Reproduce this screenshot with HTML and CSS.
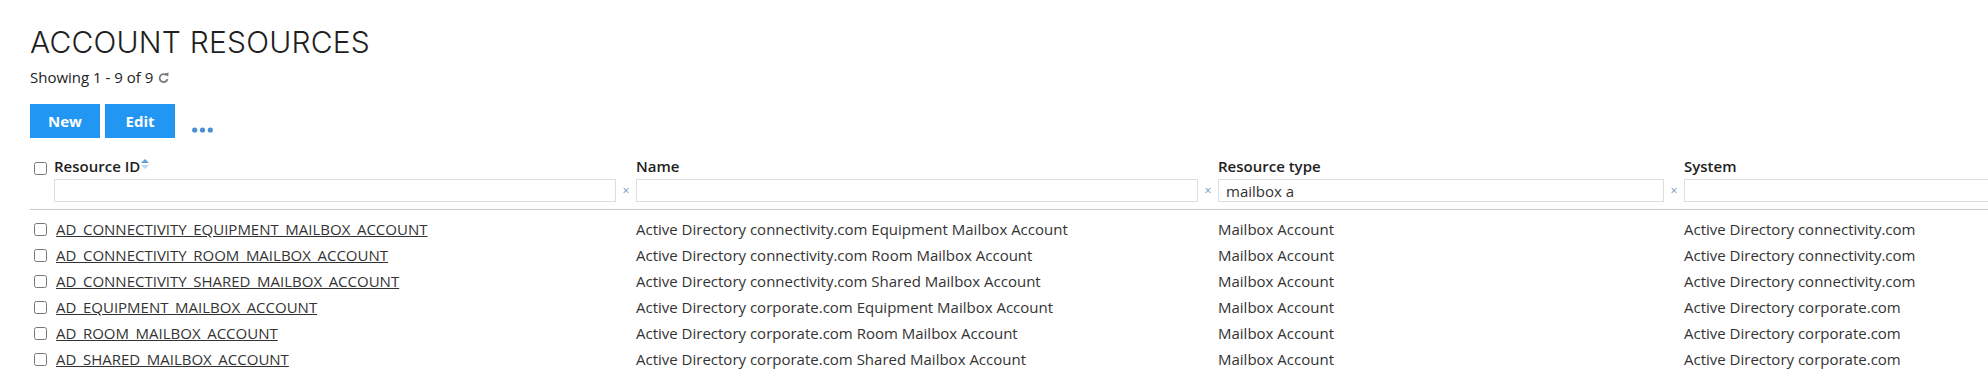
FILE: index.html
```html
<!DOCTYPE html>
<html lang="en">
<head>
<meta charset="utf-8">
<title>Account Resources</title>
<link rel="stylesheet" href="styles.css">
</head>
<body>
<div class="page">
  <h1 class="title">ACCOUNT RESOURCES</h1>
  <div class="count">Showing 1 - 9 of 9
    <svg class="refresh" width="11" height="12" viewBox="0 0 11 12"><path d="M8.6 3.4 A4 4 0 1 0 9.5 7" fill="none" stroke="#7b7b7b" stroke-width="1.8"/><polygon points="6.6,1.6 10.6,0.6 10.2,4.8" fill="#7b7b7b"/></svg>
  </div>
  <div class="toolbar">
    <button class="btn">New</button>
    <button class="btn">Edit</button>
    <svg class="more" width="21" height="6" viewBox="0 0 21 6"><circle cx="2.7" cy="3" r="2.6" fill="#4a8fd2"/><circle cx="10.5" cy="3" r="2.6" fill="#4a8fd2"/><circle cx="18.3" cy="3" r="2.6" fill="#4a8fd2"/></svg>
  </div>

  <div class="cols head">
    <div class="hcell chkcell"><input type="checkbox" class="hchk"></div>
    <div class="hcell">
      <div class="hlabel">Resource ID<svg class="sort" width="8" height="10" viewBox="0 0 8 10"><polygon points="0,4 4,0 8,4" fill="#5b9fd8"/><polygon points="0,6 4,10 8,6" fill="#bcd5ee"/></svg></div>
      <div class="filter"><input class="finput" type="text"><span class="clear">×</span></div>
    </div>
    <div class="hcell">
      <div class="hlabel">Name</div>
      <div class="filter"><input class="finput" type="text"><span class="clear">×</span></div>
    </div>
    <div class="hcell">
      <div class="hlabel">Resource type</div>
      <div class="filter"><input class="finput" type="text" value="mailbox a"><span class="clear">×</span></div>
    </div>
    <div class="hcell">
      <div class="hlabel">System</div>
      <div class="filter"><input class="finput" type="text"></div>
    </div>
  </div>

  <div class="cols body">
    <div class="cell chkcell"><input type="checkbox" class="rchk"></div>
    <div class="cell"><a class="link" href="#">AD_CONNECTIVITY_EQUIPMENT_MAILBOX_ACCOUNT</a></div>
    <div class="cell">Active Directory connectivity.com Equipment Mailbox Account</div>
    <div class="cell">Mailbox Account</div>
    <div class="cell">Active Directory connectivity.com</div>

    <div class="cell chkcell"><input type="checkbox" class="rchk"></div>
    <div class="cell"><a class="link" href="#">AD_CONNECTIVITY_ROOM_MAILBOX_ACCOUNT</a></div>
    <div class="cell">Active Directory connectivity.com Room Mailbox Account</div>
    <div class="cell">Mailbox Account</div>
    <div class="cell">Active Directory connectivity.com</div>

    <div class="cell chkcell"><input type="checkbox" class="rchk"></div>
    <div class="cell"><a class="link" href="#">AD_CONNECTIVITY_SHARED_MAILBOX_ACCOUNT</a></div>
    <div class="cell">Active Directory connectivity.com Shared Mailbox Account</div>
    <div class="cell">Mailbox Account</div>
    <div class="cell">Active Directory connectivity.com</div>

    <div class="cell chkcell"><input type="checkbox" class="rchk"></div>
    <div class="cell"><a class="link" href="#">AD_EQUIPMENT_MAILBOX_ACCOUNT</a></div>
    <div class="cell">Active Directory corporate.com Equipment Mailbox Account</div>
    <div class="cell">Mailbox Account</div>
    <div class="cell">Active Directory corporate.com</div>

    <div class="cell chkcell"><input type="checkbox" class="rchk"></div>
    <div class="cell"><a class="link" href="#">AD_ROOM_MAILBOX_ACCOUNT</a></div>
    <div class="cell">Active Directory corporate.com Room Mailbox Account</div>
    <div class="cell">Mailbox Account</div>
    <div class="cell">Active Directory corporate.com</div>

    <div class="cell chkcell"><input type="checkbox" class="rchk"></div>
    <div class="cell"><a class="link" href="#">AD_SHARED_MAILBOX_ACCOUNT</a></div>
    <div class="cell">Active Directory corporate.com Shared Mailbox Account</div>
    <div class="cell">Mailbox Account</div>
    <div class="cell">Active Directory corporate.com</div>
  </div>
</div>
</body>
</html>
```
FILE: styles.css
```css
html, body {
  margin: 0;
  padding: 0;
  background: #fff;
  overflow: hidden;
}
body {
  font-family: "Open Sans", "Liberation Sans", sans-serif;
  font-size: 15px;
  color: #333;
}
.page {
  padding: 0 0 0 30px;
  width: 2400px;
}
.title {
  margin: 0;
  padding-top: 24px;
  font-family: Inter, "Liberation Sans", sans-serif;
  font-weight: 300;
  font-size: 30px;
  line-height: 36px;
  letter-spacing: 0.2px;
  color: #1f1f1f;
}
.count {
  margin-top: 7px;
  font-size: 15px;
  line-height: 20px;
  color: #222;
  display: flex;
  align-items: center;
}
.refresh {
  margin-left: 5px;
  margin-top: 1px;
}
.toolbar {
  margin-top: 17px;
  display: flex;
  align-items: flex-end;
}
.btn {
  width: 70px;
  height: 34px;
  margin: 0 5px 0 0;
  padding: 0;
  border: 0;
  border-radius: 0;
  background: #2196f3;
  color: #fff;
  font-family: "Open Sans", "Liberation Sans", sans-serif;
  font-weight: 700;
  font-size: 15px;
}
.more {
  margin-left: 12px;
  margin-bottom: 5px;
}
.cols {
  display: grid;
  grid-template-columns: 24px 582px 582px 466px 700px;
}
.head {
  margin-top: 19px;
}
.hcell {
  border-bottom: 1px solid #c9c9c9;
  padding-bottom: 7px;
}
.hchk {
  display: block;
  margin: 5px 0 0 4px;
  width: 13px;
  height: 13px;
}
.hlabel {
  font-weight: 600;
  font-size: 15px;
  line-height: 19px;
  color: #1e1e1e;
  white-space: nowrap;
}
.sort {
  margin-left: 1px;
  vertical-align: 3px;
}
.filter {
  margin-top: 3px;
  display: flex;
  align-items: center;
}
.finput {
  box-sizing: border-box;
  width: calc(100% - 20px);
  height: 23px;
  margin: 0;
  border: 1px solid #dedede;
  border-radius: 0;
  padding: 0 7px;
  font-family: "Open Sans", "Liberation Sans", sans-serif;
  font-size: 15px;
  color: #333;
  outline: none;
}
.clear {
  width: 20px;
  text-align: center;
  font-size: 12px;
  color: #7593bb;
}
.body {
  padding-top: 6px;
}
.cell {
  height: 26px;
  line-height: 26px;
  white-space: nowrap;
  color: #333;
}
.rchk {
  display: block;
  margin: 7px 0 0 4px;
  width: 13px;
  height: 13px;
}
.link {
  color: #333;
  text-decoration: underline;
  padding-left: 2px;
}
```
